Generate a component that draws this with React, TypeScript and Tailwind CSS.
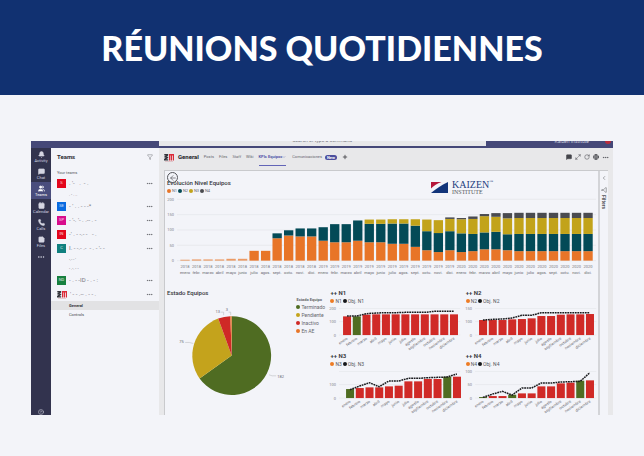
import React from 'react';
import {
  ArrowLeft,
  Bell,
  Calendar,
  ChevronDown,
  ChevronLeft,
  CircleHelp,
  Ellipsis,
  Filter,
  Globe,
  Maximize2,
  MessageSquare,
  MessageSquareText,
  Phone,
  Plus,
  RotateCw,
  StickyNote,
  Users,
} from 'lucide-react';

const MONTHS = ['enero', 'febrero', 'marzo', 'abril', 'mayo', 'junio', 'julio', 'agosto', 'septiembre', 'octubre', 'noviembre', 'diciembre'];
const SHORT = ['enero', 'febr.', 'marzo', 'abril', 'mayo', 'junio', 'julio', 'agos.', 'sept.', 'octu.', 'novi.', 'dici.'];

// one row per month: N1, N2, N3, N4
const LEVELS = [
  [3, 0, 0, 0], [4, 0, 0, 0], [4, 0, 0, 0], [4, 0, 0, 0], [6, 0, 0, 0], [6, 0, 0, 0],
  [32, 0, 0, 0], [32, 0, 0, 0], [73, 16, 0, 0], [82, 17, 0, 0], [79, 26, 0, 0], [79, 26, 0, 0],
  [65, 44, 0, 0], [60, 59, 0, 0], [60, 59, 0, 0], [65, 66, 0, 0], [60, 60, 14, 0], [60, 60, 14, 0],
  [55, 66, 14, 0], [55, 66, 14, 0], [45, 69, 21, 0], [34, 62, 38, 0], [28, 62, 42, 0], [34, 62, 40, 5],
  [28, 61, 46, 4], [31, 56, 49, 8], [37, 55, 53, 7], [37, 57, 49, 12], [34, 52, 52, 17], [31, 56, 52, 17],
  [31, 56, 52, 17], [31, 56, 52, 17], [31, 56, 52, 17], [31, 56, 52, 17], [31, 56, 52, 17], [31, 56, 52, 17],
];
const LEVEL_COLORS = ['#e87528', '#034a57', '#c2a31a', '#4a4b50'];

const TEAMS = [
  { initials: 'S', color: 'bg-[#e3061c]', name: ". '-   .  - .", channels: [{ name: '.  - . ..', active: false }] },
  { initials: 'SE', color: 'bg-[#0a6be0]', name: "- ' . . - - -*", channels: [] },
  { initials: 'SP', color: 'bg-[#d80c8c]', name: "- '-. '- . .-- . -", channels: [] },
  { initials: 'IN', color: 'bg-[#e3061c]', name: "-' . - -.- -   - .", channels: [] },
  { initials: 'C', color: 'bg-[#10807f]', name: "I. - -.- .-  - . - '- -", channels: [{ name: "-.- - '", active: false }, { name: '- .-. -  -', active: false }] },
  { initials: 'ND', color: 'bg-[#17803f]', name: '- . - -ID - . - :', channels: [] },
  { initials: '', color: '', name: "' - - .-- . - - .", channels: [{ name: 'General', active: true }, { name: 'Controls', active: false }] },
];

const RAIL = [
  { icon: Bell, label: 'Activity' },
  { icon: MessageSquareText, label: 'Chat' },
  { icon: Users, label: 'Teams' },
  { icon: Calendar, label: 'Calendar' },
  { icon: Phone, label: 'Calls' },
  { icon: StickyNote, label: 'Files' },
];

const STATES = [
  { label: 'Terminado', color: '#4f6c22', from: 0, to: 234.5 },
  { label: 'Pendiente', color: '#c4a31c', from: 234.5, to: 340 },
  { label: 'Inactivo', color: '#cf2926', from: 340, to: 358 },
  { label: 'En AE', color: '#e87528', from: 358, to: 360 },
];

const PANELS = [
  {
    name: 'N1', left: 16, max: '200', mid: '100', green: [1],
    bars: [56, 56, 61, 62, 62, 62, 62, 62, 62, 62, 62, 62],
    line: [57, 57, 64, 66, 67, 67, 68, 68, 68, 71, 71, 71],
  },
  {
    name: 'N2', left: 16, max: '150', mid: '100', green: [],
    bars: [45, 45, 45, 47, 48, 50, 57, 57, 61, 62, 62, 63],
    line: [45, 47, 48, 51, 59, 59, 67, 67, 67, 67, 67, 67],
  },
  {
    name: 'N3', left: 19, max: '', mid: '100', green: [0, 10],
    bars: [27, 30, 32, 32, 35, 37, 50, 50, 57, 57, 64, 64],
    line: [25, 36, 46, 34, 51, 51, 59, 59, 61, 62, 63, 72],
  },
  {
    name: 'N4', left: 16, max: '100', mid: '50', green: [0, 3, 10],
    bars: [3, 6, 6, 10, 14, 14, 35, 35, 44, 46, 52, 53],
    line: [2, 12, 20, 9, 30, 30, 45, 45, 48, 49, 50, 76],
  },
];

const Dot = ({ color }: { color: string }) => (
  <span className="size-1 shrink-0 rounded-full" style={{ backgroundColor: color }} />
);

const ZeitLogo = () => (
  <svg viewBox="0 0 10 9" className="w-[10px] shrink-0" aria-hidden="true">
    <path d="M.3 1h3.900v1.500L2.500 3.700h1.700v1.200L2.200 6.200h2V7.500H0V6l1.800-1.400H.3V3.400L1.800 2.500H.3z" fill="#33343b" />
    <path d="M5 1h5v6.500H8.800V2.500H8v5H6.800v-5H6.200v5H5z" fill="#dc2b38" />
    <path d="M1 8.500h8" stroke="#cf8f98" strokeWidth=".4" />
  </svg>
);

const LevelsChart = () => (
  <svg viewBox="0 0 432 86" className="w-full" role="img" aria-label="Evolución Nivel Equipos">
    {[0, 50, 100, 150, 200].map(v => (
      <g key={v}>
        <path d={`M12 ${65.500 - v * 0.306}H430`} stroke="#e4e5ea" strokeWidth=".7" />
        <text x="9" y={67 - v * 0.306} textAnchor="end" className="fill-[#83848a] text-[4px]">{v}</text>
      </g>
    ))}
    {LEVELS.map((row, i) => {
      const x = 15.3 + i * 11.49;
      let y = 65.5;
      return (
        <g key={i}>
          {row.map((v, k) => {
            const h = v * 0.306;
            y -= h;
            return <rect key={k} x={x} y={y} width="9.3" height={h} fill={LEVEL_COLORS[k]} opacity={i < 6 ? 0.7 : 1} />;
          })}
          <text x={x + 4.6} y="73" textAnchor="middle" className="fill-[#77787e] text-[4px]">{2018 + Math.floor(i / 12)}</text>
          <text x={x + 4.6} y="79" textAnchor="middle" className="fill-[#66676d] text-[4px]">{SHORT[i % 12]}</text>
        </g>
      );
    })}
  </svg>
);

const point = (deg: number, r: number) => {
  const a = (deg * Math.PI) / 180;
  return `${66 + r * Math.sin(a)} ${58 - r * Math.cos(a)}`;
};

const StatePie = () => (
  <svg viewBox="0 0 130 117" className="min-w-0 flex-1" role="img" aria-label="Estado Equipos">
    {STATES.map(s => (
      <path key={s.label} d={`M66 58L${point(s.from, 39)}A39 39 0 ${s.to - s.from > 180 ? 1 : 0} 1 ${point(s.to, 39)}z`} fill={s.color} />
    ))}
    <path d="M103 77l3 1h4M28 46l-4-1h-4M58 18v-3h-3M65 18v-3h-2" fill="none" stroke="#b4b5ba" strokeWidth=".5" />
    <g className="fill-[#6b6c72] text-[4px]">
      <text x="111" y="80">182</text>
      <text x="14" y="46">75</text>
      <text x="50" y="16">13</text>
      <text x="60" y="14">3</text>
    </g>
  </svg>
);

const Panel = ({ panel }: { panel: typeof PANELS[number] }) => {
  const center = (i: number) => panel.left + 3.9 + i * 9.7;
  return (
    <section className="pt-2">
      <h3 className="px-[3px] text-[6px] leading-[8px] font-bold text-[#3a3b40]">++ {panel.name}</h3>
      <div className="flex h-2 items-center gap-px px-[3px] text-[5px] leading-[8px] text-[#55565b]">
        <Dot color="#ee7b24" />
        <span>{panel.name}</span>
        <Dot color="#16171a" />
        <span>Obj. {panel.name}</span>
      </div>
      <svg viewBox="0 0 135 39" className="w-full overflow-visible" role="img" aria-label={panel.name}>
        <path d="M12 3.500H133M12 16.500H133M12 30H133" stroke="#e4e5ea" strokeWidth=".6" />
        <g textAnchor="end" className="fill-[#83848a] text-[4px]">
          <text x="9" y="5">{panel.max}</text>
          <text x="9" y="18">{panel.mid}</text>
          <text x="9" y="32">0</text>
        </g>
        {panel.bars.map((v, i) => (
          <rect
            key={i}
            x={panel.left + i * 9.7}
            y={30 - v / 3}
            width="8"
            height={v / 3}
            fill={panel.green.some(g => g === i) ? '#4f6c22' : '#d02a27'}
          />
        ))}
        <polyline
          points={panel.line.map((v, i) => `${center(i)},${30 - v / 3}`).join(' ')}
          fill="none"
          stroke="#1b1c1f"
          strokeWidth="1.500"
          strokeDasharray="1.800 .7"
        />
        {MONTHS.map((m, i) => (
          <text
            key={m}
            textAnchor="end"
            transform={`translate(${center(i) + 1} 34) rotate(-35)`}
            className="fill-[#66676d] text-[4px]"
          >
            {m}
          </text>
        ))}
      </svg>
    </section>
  );
};

const Sidebar = () => (
  <aside className="w-[108px] shrink-0">
    <div className="flex h-[18px] items-center justify-between px-[6px]">
      <h2 className="text-[6px] leading-[8px] font-bold text-[#2c2d33]">Teams</h2>
      <button aria-label="Filter" className="text-[#77787e]"><Filter className="size-[6px]" /></button>
    </div>
    <p className="px-[6px] pt-1 text-[4px] leading-[6px] text-[#55565b]">Your teams</p>
    {TEAMS.map((team, i) => (
      <div key={i}>
        <div className="flex h-[14px] items-center gap-[3px] px-[6px]">
          {team.initials ? (
            <span className={`flex size-[9px] shrink-0 items-center justify-center text-[4px] leading-none text-white/80 ${team.color}`}>
              {team.initials}
            </span>
          ) : (
            <ZeitLogo />
          )}
          <span className="flex-1 truncate text-[6px] leading-[8px] whitespace-pre text-[#77787e]">{team.name}</span>
          <button aria-label="More options" className="text-[#55565b]"><Ellipsis className="size-[7px]" /></button>
        </div>
        {team.channels.map(c => (
          <a
            key={c.name}
            href="#"
            className={`block h-[9px] pl-[18px] text-[4px] leading-[9px] ${c.active ? 'bg-[#e2e2e4] font-bold text-[#33343a]' : 'text-[#44454b]'}`}
          >
            {c.name}
          </a>
        ))}
      </div>
    ))}
  </aside>
);

const TabBar = () => (
  <div className="flex h-[18px] items-stretch justify-between pr-1 pl-[5px] text-[4px] leading-[8px] text-[#66676d]">
    <nav className="flex items-stretch gap-[5px]">
      <div className="flex items-center gap-1">
        <ZeitLogo />
        <h1 className="text-[6px] font-bold text-[#222329]">General</h1>
      </div>
      <a href="#" className="flex items-center">Posts</a>
      <a href="#" className="flex items-center">Files</a>
      <a href="#" className="flex items-center">Staff</a>
      <a href="#" className="flex items-center">Wiki</a>
      <a href="#" className="flex items-center border-b border-[#6264b7] font-bold text-[#5456a8]">
        KPIs Equipos
        <ChevronDown className="size-1" />
      </a>
      <a href="#" className="flex items-center gap-[3px] pl-px">
        Comunicaciones
        <span className="rounded-full bg-[#4b4e9e] px-[2px] leading-[5px] font-bold text-white">New</span>
      </a>
      <button aria-label="Add a tab" className="text-[#33343a]"><Plus className="size-[6px]" strokeWidth={3} /></button>
    </nav>
    <div className="flex items-center gap-[3px] text-[#44454b]">
      <button aria-label="Conversation"><MessageSquare className="size-[6px]" fill="currentColor" /></button>
      <button aria-label="Expand"><Maximize2 className="size-[6px]" /></button>
      <button aria-label="Reload"><RotateCw className="size-[6px]" /></button>
      <button aria-label="Open website"><Globe className="size-[6px]" strokeWidth={3} /></button>
      <button aria-label="More"><Ellipsis className="size-[7px]" /></button>
    </div>
  </div>
);

const Report = () => (
  <div className="relative min-w-0 flex-1">
    <button aria-label="Back" className="absolute top-px left-[2px] text-[#55565b]">
      <span className="flex size-[11px] items-center justify-center rounded-full border border-current">
        <ArrowLeft className="size-2" />
      </span>
    </button>
    <div className="flex h-6 items-end">
      <div className="w-[266px] px-[2px]">
        <h2 className="text-[6px] leading-[8px] font-medium text-[#33343a]">Evolución Nivel Equipos</h2>
        <div className="flex h-2 items-center text-[4px] leading-[8px] text-[#66676d]">
          {LEVEL_COLORS.map((color, i) => (
            <span key={color} className="flex w-[11px] items-center gap-px">
              <Dot color={color} />
              N{i + 1}
            </span>
          ))}
        </div>
      </div>
      <div className="flex items-center gap-1">
        <svg viewBox="0 0 17 11" className="w-[17px]" aria-hidden="true">
          <path d="M0 0h10.500C6 1.500 3 3.500 0 6.500z" fill="#b5173a" />
          <path d="M17 0v11H0C5 7 10 3 17 0z" fill="#12347a" />
        </svg>
        <div className="font-['Liberation_Serif',serif] text-[#1d3d80]">
          <p className="flex items-start text-[10px] leading-[9px]">
            KAIZEN<span className="text-[4px] leading-[4px]">™</span>
          </p>
          <p className="text-[6px] leading-[6px] text-[#55565b]">INSTITUTE</p>
        </div>
      </div>
    </div>
    <LevelsChart />
    <div className="grid grid-cols-[162fr_135fr_135fr]">
      <section className="pt-2">
        <h2 className="px-[2px] text-[6px] leading-[8px] font-medium text-[#33343a]">Estado Equipos</h2>
        <div className="flex items-start">
          <StatePie />
          <div className="w-[31px] text-[5px] leading-[8px] text-[#66676d]">
            <p className="text-[4px] leading-[6px] font-bold">Estado Equipo</p>
            <ul>
              {STATES.map(s => (
                <li key={s.label} className="flex items-center gap-px">
                  <Dot color={s.color} />
                  {s.label}
                </li>
              ))}
            </ul>
          </div>
        </div>
      </section>
      <div className="col-span-2 grid grid-cols-2 content-start">
        {PANELS.map(p => <Panel key={p.name} panel={p} />)}
      </div>
    </div>
  </div>
);

const App = () => {
  return (
    <div className="min-h-screen bg-[#f3f4f9] font-['Roboto','Noto_Sans',sans-serif]">
      <header className="flex h-[95px] items-center justify-center bg-[#113171]">
        <p className="font-['Lato',sans-serif] text-[34px] leading-[40px] font-black text-white">RÉUNIONS QUOTIDIENNES</p>
      </header>

      <main className="px-[31px] pt-[46px] pb-10">
        <div className="flex h-[7px] overflow-hidden bg-[#454878] text-[5px] leading-[5px]">
          <div className="w-[128px] shrink-0" />
          <div className="flex h-[5px] flex-[328] items-end justify-center overflow-hidden bg-[#e8e8ea] pb-[3px] text-[#77787e]">
            Search or type a command
          </div>
          <div className="flex h-[5px] flex-[126] items-end justify-end gap-4 pr-[2px] pb-[2px] text-[#c9cadc]">
            Kaizen Institute
            <span className="size-[6px] rounded-full bg-[#b92b3c]" />
          </div>
        </div>

        <div className="flex">
          <nav className="flex w-5 shrink-0 flex-col bg-[#32334e] text-[#d5d6e2]">
            {RAIL.map(({ icon: Icon, label }) => (
              <button
                key={label}
                className={`flex h-[17px] flex-col items-center justify-center ${label === 'Teams' ? 'bg-[#4a4d7d] text-white' : ''}`}
              >
                <Icon className="size-[7px]" fill="currentColor" />
                <span className="text-[4px] leading-[5px]">{label}</span>
              </button>
            ))}
            <button aria-label="More apps" className="flex h-[14px] items-center justify-center"><Ellipsis className="size-2" /></button>
            <button aria-label="Help" className="mt-auto flex justify-center"><CircleHelp className="size-[6px]" /></button>
          </nav>

          <Sidebar />

          <div className="flex min-w-0 flex-1 flex-col bg-[#e8e8ea]">
            <TabBar />
            <div className="mt-1 mr-[5px] ml-[5px] flex flex-1 border-t border-l border-[#c9cacd] bg-[#f3f4f9]">
              <Report />
              <aside className="flex w-[10px] shrink-0 flex-col items-center gap-[6px] border-l-2 border-[#d3d4d8] pt-1 text-[#55565b]">
                <button aria-label="Expand filters"><ChevronLeft className="size-[6px]" /></button>
                <Filter className="size-[6px] rotate-90" />
                <span className="-mt-1 text-[5px] leading-[6px] font-bold [writing-mode:vertical-rl]">Filters</span>
              </aside>
            </div>
          </div>
        </div>
      </main>
    </div>
  );
};

export default App;
